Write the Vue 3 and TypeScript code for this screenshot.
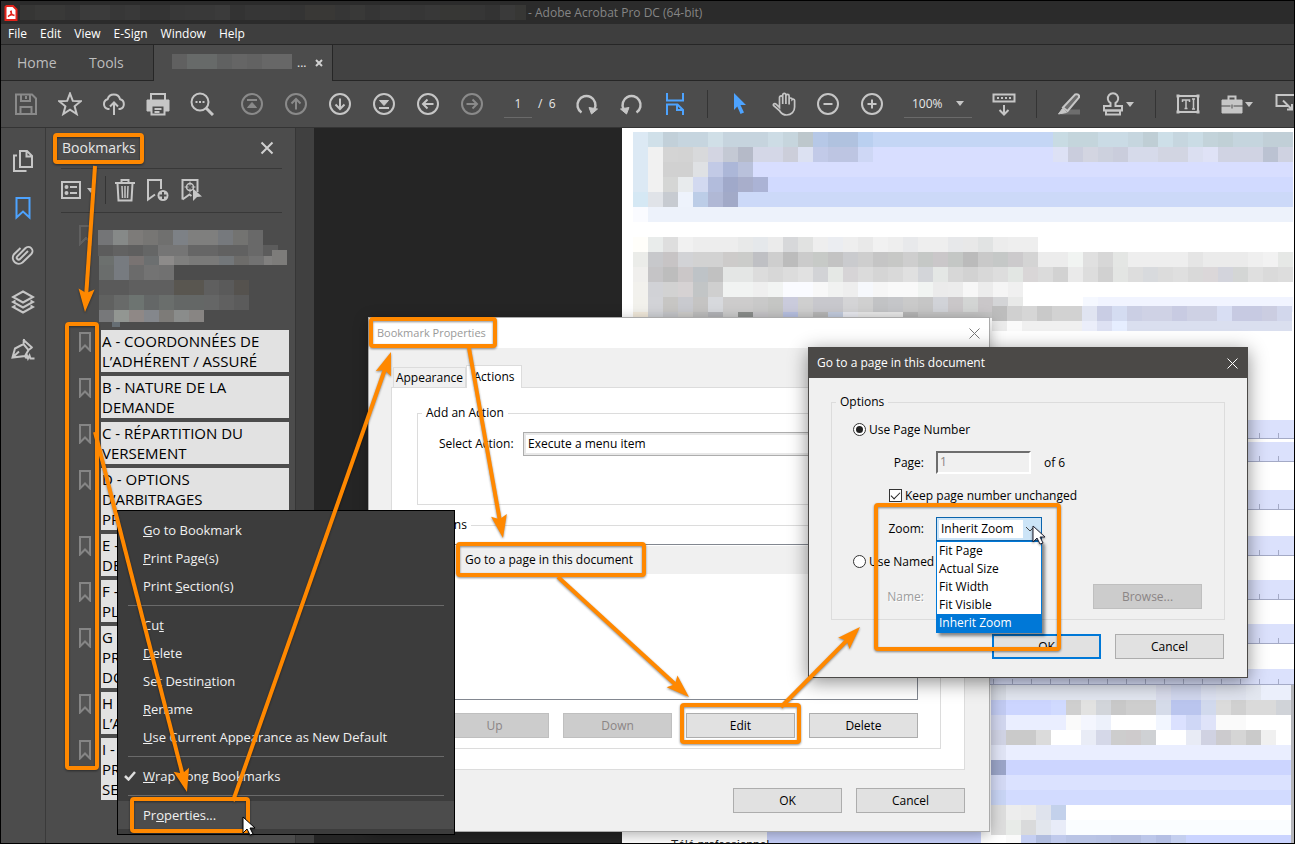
<script setup lang="ts">
import { ref } from 'vue'

interface Rect { x: number; y: number; w: number; h: number; fill: string }
type Strip = [x: number, y: number, h: number, colours: string]

/** Expands strips such as "c6d5df*3 f0f0f0" into coloured cells. */
function cells(strips: Strip[], size = 15): Rect[] {
  const out: Rect[] = []
  for (const [x0, y, h, colours] of strips) {
    let x = x0
    for (const token of colours.split(' ')) {
      const [hex, count] = token.split('*')
      const w = Number(count ?? 1) * size
      if (hex !== '-') out.push({ x, y, w, h, fill: '#' + hex })
      x += w
    }
  }
  return out
}

const titleCells = cells([[0, 0, 15, '363635 393938*2 363636 3b3b3b*2 373737 393939 343434*2 383838 393939*2 3b3b3b 333333 363636*3 343434 393836*2 363636 393938 353535 383838*2 363636 383838 373735*2 363636 333333 3a3a3a 373735*2']])
const tabCells = cells([[0, 0, 15, '606060 676a69*2 606161 656565 626262 676767*2']])

const panelCells = cells([
  [52, 17, 15, '747577 868988 7d7b79 777674 70706f 7d8186 7f7f7e*2 76797d 737371 696969'],
  [52, 32, 11, '5c5c5c 626262 5f5f5f 656666 757575*2 666666*2 616161*2 696969 5c5c5c'],
  [53, 43, 9, '6c706e 777b80 797372 6c6f70 8d8b8a 7f7f7e 7a7a79*2 73777a 6d6c6a 727272 81807f'],
  [226, 37, 15, '7d7c7a'],
  [53, 52, 15, '6a6d6c 777b80 6b6b6b 737373 717171'],
  [53, 67, 15, '5a5a5a*2 5f5f5f*3 595650*2 5f5f5f 5a5a5a 55524e'],
  [53, 82, 15, '606160 686a69 6d7471 646767 6a6e6c 646766*2 656666 606060 5b5b5b'],
  [53, 97, 12, '77787a 929692 8f8886 84878c 7d7b78 8a8c8b 888583'],
])

const pageCells = cells([
  [11, 4, 15, 'dce9f4 d0e0e9 c2d0d9 c6d5df*2 d0dfe7 c6d4de*3 cddce5 c6d5dd bdc7cc b6c8e7 b0c2df*2 bad0f0 c4d6f5*12 c8dbe3 c4d5dc*2 cadbe5*2 c6d6df bfced5 cddfe8 c6d6df cadce5 c3d3da c0d0d6 c5d5de*2 c1cfd7*2'],
  [11, 19, 15, 'dce9f4 f1f1f1 d4d4d4 d3d3d3 d8d9db d3d5e2 c4c9d4 b5bac8 d4d7e7*2 ccceda dce1f2 c2cae8 bdc5e2*2 ced7f5 d8deff*12 dde1f5 cacddd d3d5e1 cdd1de cacddc d6daea*2 d2d5e2*2 dbdff1 dfe2f6 d0d3e3*3 bbc2d2 cfd2e1'],
  [11, 34, 15, 'dce9f4 f1f1f1 d1d1d1*2 dfe1e4 c2cae6 acb7d8 b9c1db d8deff*36'],
  [11, 49, 15, 'dce9f4 f1f1f1 d5d6d5 e8ebed d2d9f0 b2bcdc a0a9ca a8aecb abb3d5 d1daff*35'],
  [11, 64, 15, 'd5e8f4 e0e3e8 c7cbd1 eef3fc bccde7 b0b8d5 a2aac8 ccd9f8*37'],
  [11, 79, 15, 'fafbff edf2fb*43'],
  [11, 109, 15, 'fffefa e9eceb dedede f1f1f1 ededed*3 e8e9e9 e5e8eb ebebeb d7d8da e1e2e1 eeeeee ebedf1 eeeeee e9e9e9 f1f1f1 eeeeee e8e9eb eeeeee*2 e7e8ea e8e8e8 e1e3e3 ececec eeeeee*2'],
  [11, 124, 15, 'ebece9 c7c8cb c7c4c5 d2d3d6 d2d2d2*2 cdcbca cbccca bfc0c4 cecece bcbcbc cbcbcb c7cac7 c3c3c3 cacbce cecece c5c5c5 c7c8c6 cecece c5c8c6 cac7c9 c4c7c5 bbbbbb c9c9c9 c5c8c7 cccacc d4d4d4 ececec*2 f1f4f2 e0e0e0 d7d7d7 e4e6e4 eeeeee*4 e5e5e5 ebebeb*3 efefef f2f2f2 e6e8e6'],
  [11, 139, 15, 'f0efed c5c4c6 bdbdbd cbc7c8 bec3c7 c1c1c1 e4e6e5*2 dcdcdc d7d7d7 dcdcdc e1e1e1 d2d3d6 e5e8e5 d6d4d6 dbdbdb d5d5d5 d9d9d9 e0e0e0 d3d5d9 e4e7e5 d7d7d7 d2d2d2 d8d8d8 dddddd e2e6e3 d9d6d7 dbdbdb d2d2d2 eaeaea dddddd d1d1d1 e3e5e3 dddddd d8dadd dcdcdc dfdfdf d9d9d9 dbd7d9 d3d4dc d4d6d5 dfdfdf dadada dddddd'],
  [11, 154, 15, 'f2f1ed d1d2d6 d2d2d2 d6d2d3 c2c5c6 cfcfcf f1f3f2*2 efefef f2f4f3 fafbff*2 f8f8f8 f1f2f1 eeeeee f6f8fc f6f6f6 f9f9f9*2 f1f4f2 ebebeb ececec f7f7f7 ececec f5f5f5 f0f0f0'],
  [11, 169, 15, 'f2f1ec d2d3d7 c7c6c4 c9cacf c5c4c3 d7d9dd cdcccc*2 c9c9c9 c5c6c4 cacbdc cfcfcf c8c8cd*2 d4d4d6 d0d0d0 c2c3c5 c5c6c9 cacaca c6c6c6 d1d3d8 cac7c9 d3d5d4 cac7c9 d4d5d7 e8e9e8 -*4 f5f8ff f1f4ff*13'],
  [11, 184, 6, 'f2eadc d0d2d6 c5c6c9 cdccca bebebe b3b4b8 cccccc 8b8e8c c7c6c9 c6c6c6 b8c1e2 cccccc b7b7b7 c3ccde e9eaf0 e9e9e9*3 b6b6b6 c4c4c4*5'],
  [370, 178, 15, 'bdbdbd d0d0d0 d6d6d6 c9c9c9 d2d2d2*2 e0e4f1 c9cde4 d4dcf1 cbcfe4 cfd2e5*2 c8cbe2 ced1e4*2 d8def3 c7cae2*2 cbcde1 d2d7ec'],
  [370, 193, 10, 'ebebeb fafafa f0f0f0*4 ebeefa dde1f3 e6eeff dadfef*11'],
  [369, 557, 15, 'd8dce5 e2e6f0*10 d9dcec d1d7ee*2 dce1f1 dfe3ee*2 e3e7f0 ebeffb*2'],
  [369, 572, 15, 'c1caf1 ccd5ff*3 d0daff cfcfcf e2e2e1 d2d5da c8c8c8 cecece*2 d5dbe9 bac5ee*2 d1d9ed dbdbdb d0d0d0 dadada*2 d0d3d8'],
  [369, 587, 15, 'd1d6ee eaeeff*4 fafafa f4f6fe edf1fb ffffff*3 f2f6ff dbe1ff cfd7f6 dfe3f9 fafafa*2 ffffff*3'],
  [369, 602, 15, 'd0d3e4 cacaca*2 dbdbdb ffffff*2 e9ecf6 d5d8e8 cdcdcd cecbcc cfd1d4 ffffff*2 e8ebf5 d0d2e2 cccbce d5d5d5 cacaca f0f0f0 ffffff'],
  [369, 617, 15, 'e0e4f5 eaeeff*19'],
  [369, 632, 15, '9ba5c8 ccd5ff*19'],
  [369, 647, 15, 'd3d9f4 dbe2ff*19'],
  [369, 662, 15, 'c8d4f4 d2dbff*19'],
  [369, 677, 15, 'dddddd ededed ebebeb dfe3ed c3d1eb ffffff*15'],
  [369, 692, 15, 'dddddd e8ebe8 d9dadb e2e6ed e8ecf8 fafdff*15'],
  [369, 707, 8, 'ffffff fafafa c5cff2 b1bddf c0caec b9c4e5*2 b7c2e4 b4bee0*2 bcc7ea b4bfe4 c4cfef cad4ff*7'],
])

const bands: Array<[y: number, h: number]> = [[292, 19], [314, 20], [362, 20], [408, 20], [452, 20], [496, 20], [541, 16]]
const ticks = Array.from({ length: 16 }, (_, i) => 371 + i * 19)

const menus = ['File', 'Edit', 'View', 'E-Sign', 'Window', 'Help']

const icons: Record<string, string> = {
  save: '<path d="M2 2.500h16l4 4V22H2z"/><path d="M7 3v6h9V3M12 4v3M6.500 22v-7h11v7"/>',
  star: '<path d="M12 1.500l2.800 7.400 8 .4-6.200 5 2.100 7.700-6.700-4.300L5.300 22l2.100-7.700-6.200-5 8-.4z"/>',
  cloud: '<path d="M7.500 17H6a5 5 0 0 1-.4-9.700 6.500 6.500 0 0 1 12.500 0A5 5 0 0 1 18 17h-1.500"/><path d="M12 23V11M8 14.500l4-4 4 4"/>',
  print: '<path class="solid" d="M1 8h22v11h-4v-5H5v5H1z"/><path d="M5 8V2h14v6M5.500 14v8.500h13V14M8.500 17h7M8.500 20h5"/>',
  search: '<circle cx="10" cy="10" r="8.500"/><path d="M16 16l7 7" stroke-width="3"/><path d="M5.500 10h2M9 10h2M12.500 10h2"/>',
  first: '<circle cx="12" cy="12" r="10"/><path d="M7 8h10"/><path class="solid" d="M12 10.500l4.500 5h-9z"/>',
  up: '<circle cx="12" cy="12" r="10"/><path d="M12 17.500V7M7.500 11.500L12 7l4.500 4.500"/>',
  down: '<circle cx="12" cy="12" r="10"/><path d="M12 6.500V17M7.500 12.500L12 17l4.500-4.500"/>',
  last: '<circle cx="12" cy="12" r="10"/><path d="M7 16h10"/><path class="solid" d="M12 13.500l4.500-5h-9z"/>',
  back: '<circle cx="12" cy="12" r="10"/><path d="M17.500 12H7M11.500 7.500L7 12l4.500 4.500"/>',
  next: '<circle cx="12" cy="12" r="10"/><path d="M6.500 12H17M12.500 7.500L17 12l-4.500 4.500"/>',
  cw: '<path d="M6.500 20.500A9 9 0 1 1 19.500 17" stroke-width="2.500"/><path class="solid" d="M14 15.500l8.500 1.500-6 5z"/>',
  ccw: '<path d="M17.500 20.500A9 9 0 1 0 4.500 17" stroke-width="2.500"/><path class="solid" d="M10 15.500l-8.500 1.500 6 5z"/>',
  fit: '<path d="M4 1v7.500h16V1M4 23V12.500h10.500L20 18v5M14 12.500V18h6"/>',
  arrow: '<path class="solid bare" d="M6 1l12 12h-5.500l3.500 7.500-3.500 1.500-3.200-7.500L6 18z"/>',
  hand: '<path d="M7.500 14V5.500a1.600 1.600 0 0 1 3.200 0V12 3a1.600 1.600 0 0 1 3.200 0v9V4a1.600 1.600 0 0 1 3.200 0v8.500V7.500a1.500 1.500 0 0 1 3 0 1.500 1.500 0 0 1 2.500 1V15c0 4.500-3 8-8 8-4 0-5.800-2-7.200-4.500L1.500 13.500c-.6-1.500 1.400-2.600 2.600-1.300L7.500 15.500z" stroke-width="1.700"/>',
  minus: '<circle cx="12" cy="12" r="10"/><path d="M7.500 12h9"/>',
  plus: '<circle cx="12" cy="12" r="10"/><path d="M7.500 12h9M12 7.500v9"/>',
  scroll: '<path d="M1.500 2.500h21v7h-21zM12 13v9M7.500 18l4.500 4.500 4.500-4.500"/><path d="M5 6h14" stroke-dasharray="2 2"/>',
  pen: '<path class="dim" d="M8 17.500h15v5H4z"/><path class="dim" d="M6 15.500L18 2.500h4v3L10.500 19z"/><path d="M6 15.500L18 2.500q3-1 4 1v2L10.500 19z"/><path class="solid" d="M5.500 16.500l4 4L1.500 22z"/>',
  stamp: '<path d="M9.500 14V11A5.200 5.200 0 1 1 14.500 11v3h6.500v4.500H3V14z"/><path d="M5 22.500h14v-4H5z"/>',
  text: '<path d="M2 4h20v16H2z"/><path d="M6.500 10V8h7v2M10 8v8.500M8.500 16.500h3M16 7h3M17.500 7v10M16 17h3" stroke-width="1.500"/><path class="solid" d="M.5 2.500h3v3h-3zM20.500 2.500h3v3h-3zM.5 18.500h3v3h-3zM20.500 18.500h3v3h-3z" stroke="none"/>',
  briefcase: '<path class="solid" d="M2 8h20v13H2z"/><path d="M8.500 8V4.500h7V8"/><path class="cut" d="M1 14h9.500M13.500 14H23M12 12.500v4"/>',
  note: '<path d="M15 14H2.500V3H22v10"/><path d="M9 8.500l9 9M18 12v5.500h-5"/>',
}

interface Tool { icon: string; label: string; off?: boolean; blue?: boolean; caret?: boolean; gap?: boolean }
const fileTools: Tool[] = [
  { icon: 'save', label: 'Save', off: true }, { icon: 'star', label: 'Star' }, { icon: 'cloud', label: 'Upload' },
  { icon: 'print', label: 'Print' }, { icon: 'search', label: 'Search' },
  { icon: 'first', label: 'First page', off: true, gap: true }, { icon: 'up', label: 'Previous page', off: true },
  { icon: 'down', label: 'Next page' }, { icon: 'last', label: 'Last page' },
  { icon: 'back', label: 'Previous view' }, { icon: 'next', label: 'Next view', off: true },
]
const viewTools: Tool[] = [
  { icon: 'cw', label: 'Rotate clockwise' }, { icon: 'ccw', label: 'Rotate counterclockwise' }, { icon: 'fit', label: 'Scrolling pages', blue: true },
]
const pointerTools: Tool[] = [
  { icon: 'arrow', label: 'Select', blue: true }, { icon: 'hand', label: 'Pan' },
  { icon: 'minus', label: 'Zoom out' }, { icon: 'plus', label: 'Zoom in' },
]
const markTools: Tool[] = [{ icon: 'pen', label: 'Highlight' }, { icon: 'stamp', label: 'Stamp', caret: true }]
const editTools: Tool[] = [
  { icon: 'text', label: 'Edit text' }, { icon: 'briefcase', label: 'More tools', caret: true }, { icon: 'note', label: 'Comment' },
]

const bookmarks: string[][] = [
  ['A - COORDONNÉES DE', 'L’ADHÉRENT / ASSURÉ'],
  ['B - NATURE DE LA', 'DEMANDE'],
  ['C - RÉPARTITION DU', 'VERSEMENT'],
  ['D - OPTIONS', 'D’ARBITRAGES', 'PR'],
  ['E -', 'DE'],
  ['F -', 'PL'],
  ['G', 'PR', 'DO'],
  ['H', 'L’A'],
  ['I -', 'PR', 'SE'],
]

interface MenuItem { pre: string; key: string; post: string; checked?: boolean; active?: boolean }
const menuGroups: MenuItem[][] = [
  [{ pre: '', key: 'G', post: 'o to Bookmark' }, { pre: '', key: 'P', post: 'rint Page(s)' }, { pre: 'Print ', key: 'S', post: 'ection(s)' }],
  [{ pre: 'Cu', key: 't', post: '' }, { pre: '', key: 'D', post: 'elete' }, { pre: 'Set Destin', key: 'a', post: 'tion' }, { pre: '', key: 'R', post: 'ename' }, { pre: '', key: 'U', post: 'se Current Appearance as New Default' }],
  [{ pre: '', key: 'W', post: 'rap Long Bookmarks', checked: true }],
  [{ pre: 'Pr', key: 'o', post: 'perties...', active: true }],
]

const zoomChoices = ['Fit Page', 'Actual Size', 'Fit Width', 'Fit Visible', 'Inherit Zoom']
const zoom = ref('Inherit Zoom')
const target = ref('page')
const keepPage = ref(true)

const frames = [
  [55, 135, 87, 27], [67, 324, 30, 444], [371, 319, 124, 27], [458, 544, 186, 31],
  [682, 705, 117, 37], [132, 799, 116, 32], [876, 505, 183, 144],
]
const arrows = [
  [95, 166, 85, 312], [95, 432, 187, 792], [233, 801, 391, 352],
  [469, 348, 503, 538], [558, 577, 689, 697], [781, 707, 860, 627],
].map(([x1, y1, x2, y2]) => {
  const len = Math.hypot(x2 - x1, y2 - y1)
  const angle = (Math.atan2(y2 - y1, x2 - x1) * 180) / Math.PI
  return { len, place: `translate(${x1} ${y1}) rotate(${angle})` }
})
</script>

<template>
  <div class="app">
    <header class="titlebar">
      <svg class="logo" width="14" height="16" viewBox="0 0 14 16">
        <path d="M2.500 1h6.500L12.500 4.500V15h-11V2z" fill="#fff" stroke="#e2231a" stroke-width="2" />
        <path d="M4 11.500c3-1.500 4-4 3-6M6.500 6c.5 3 2 4 4 4.500M4 11.500c2-2 4.500-2 6.500-1" fill="none" stroke="#e2231a" stroke-width="1.400" />
      </svg>
      <svg class="title-mask" width="506" height="15" shape-rendering="crispEdges">
        <rect v-for="(c, i) in titleCells" :key="i" :x="c.x" :y="c.y" :width="c.w" :height="c.h" :fill="c.fill" />
      </svg>
      <span>- Adobe Acrobat Pro DC (64-bit)</span>
    </header>

    <nav class="menubar"><button v-for="m in menus" :key="m" type="button">{{ m }}</button></nav>

    <nav class="tabs">
      <button class="big" type="button">Home</button>
      <button class="big" type="button">Tools</button>
      <div class="doc-tab">
        <svg width="120" height="15" shape-rendering="crispEdges">
          <rect v-for="(c, i) in tabCells" :key="i" :x="c.x" :y="c.y" :width="c.w" :height="c.h" :fill="c.fill" />
        </svg>
        <span>...</span>
        <button type="button" aria-label="Close tab">
          <svg width="8" height="8" viewBox="0 0 8 8"><path d="M1 1l6 6M7 1L1 7" stroke="#d0d0d0" stroke-width="2" /></svg>
        </button>
      </div>
    </nav>

    <div class="toolbar">
      <button v-for="t in fileTools" :key="t.icon" type="button" class="tool" :class="{ off: t.off, gap: t.gap }" :aria-label="t.label">
        <svg viewBox="0 0 24 24" v-html="icons[t.icon]" />
      </button>
      <div class="pager"><input type="text" value="1" aria-label="Page number"><span>/&nbsp; 6</span></div>
      <button v-for="t in viewTools" :key="t.icon" type="button" class="tool" :class="{ blue: t.blue }" :aria-label="t.label">
        <svg viewBox="0 0 24 24" v-html="icons[t.icon]" />
      </button>
      <i class="divider" />
      <button v-for="t in pointerTools" :key="t.icon" type="button" class="tool" :class="{ blue: t.blue }" :aria-label="t.label">
        <svg viewBox="0 0 24 24" v-html="icons[t.icon]" />
      </button>
      <div class="scale">
        <select aria-label="Zoom level"><option>100%</option></select>
        <i class="caret" />
      </div>
      <button type="button" class="tool" aria-label="Page display"><svg viewBox="0 0 24 24" v-html="icons.scroll" /></button>
      <i class="divider" />
      <button v-for="t in markTools" :key="t.icon" type="button" class="tool" :class="{ wide: t.caret }" :aria-label="t.label">
        <svg viewBox="0 0 24 24" v-html="icons[t.icon]" /><i v-if="t.caret" class="caret" />
      </button>
      <i class="divider" />
      <button v-for="t in editTools" :key="t.icon" type="button" class="tool" :class="{ wide: t.caret }" :aria-label="t.label">
        <svg viewBox="0 0 24 24" v-html="icons[t.icon]" /><i v-if="t.caret" class="caret" />
      </button>
    </div>

    <main class="workspace">
      <nav class="rail">
        <button type="button" aria-label="Page thumbnails">
          <svg viewBox="0 0 24 24"><path d="M9 2h7l5 5v11H9zM15.500 2v5.500H21M6 6.500H3v15.500h11.500v-1" /></svg>
        </button>
        <button type="button" class="blue" aria-label="Bookmarks">
          <svg viewBox="0 0 24 24"><path d="M5.500 2h13v19.500L12 15.500l-6.500 6z" /></svg>
        </button>
        <button type="button" aria-label="Attachments">
          <svg viewBox="0 0 24 24"><path d="M17 8l-8 8a1.800 1.800 0 0 1-2.700-2.600l8-8.200a4 4 0 0 1 6 5.800L11.500 19.500a6 6 0 0 1-8.700-8L9.500 5" /></svg>
        </button>
        <button type="button" aria-label="Layers">
          <svg viewBox="0 0 24 24"><path d="M12 1.500L22 7l-10 5.500L2 7zM4.500 10.500L2 12l10 5.500L22 12l-2.500-1.500M4.500 15.500L2 17l10 5.500L22 17l-2.500-1.500" /></svg>
        </button>
        <button type="button" aria-label="Signatures">
          <svg viewBox="0 0 24 24"><path d="M1.500 20.500L4 11.500l8.500-4.500 5 6-3.500 6zM1.500 20.500L8 14.500M12.500 7L13 2M17.500 13l3.500-2.500M12 2.500l9.500 8.500M14.500 21.500l1.500-3 1 3 1.500-3 1 3h4" /></svg>
        </button>
      </nav>

      <aside class="panel">
        <header>
          <h2>Bookmarks</h2>
          <button type="button" aria-label="Close panel"><svg width="14" height="14" viewBox="0 0 14 14"><path d="M1.500 1.500l11 11M12.500 1.500l-11 11" stroke="#d0d0d0" stroke-width="2" /></svg></button>
        </header>
        <div class="panel-tools">
          <button type="button" aria-label="Options" class="opts">
            <svg width="20" height="18" viewBox="0 0 20 18"><path d="M1 1h18v16H1zM9 6h7M9 12h7M4 6h3M4 12h3" /><circle cx="5.500" cy="6" r="1" /><circle cx="5.500" cy="12" r="1" /></svg>
            <i class="caret" />
          </button>
          <i class="divider" />
          <button type="button" aria-label="Delete bookmark">
            <svg width="22" height="24" viewBox="0 0 22 24"><path d="M1 5h20M7.500 4.500V2h7v2.500M3.500 5.500l1 17h13l1-17" /><path d="M8 8l.5 12M11 8v12M14 8l-.5 12" stroke-width="1.500" /></svg>
          </button>
          <button type="button" aria-label="New bookmark">
            <svg width="24" height="24" viewBox="0 0 24 24"><path d="M9 16.500L2 21.500V2h13v9" /><circle cx="17" cy="17.500" r="5.500" class="fill" /><path d="M13.500 17.500h7M17 14v7" class="cut" /></svg>
          </button>
          <button type="button" aria-label="Find bookmark">
            <svg width="24" height="24" viewBox="0 0 24 24"><path d="M2.500 21.500V2h15v12M2.500 21.500l7-5 2 1.500" /><circle cx="10" cy="9" r="3.500" stroke-width="1.500" /><path d="M10 3.500v4M10 10.500v4M4.500 9h4M11.500 9h4" stroke-width="1" /><path d="M13 10.500l9 8-5 .5-4 4z" class="fill" /></svg>
          </button>
        </div>
        <svg class="masked" shape-rendering="crispEdges">
          <path d="M34 13h11v18l-5-6-6 6z" fill="none" stroke="#606060" stroke-width="2" />
          <rect v-for="(c, i) in panelCells" :key="i" :x="c.x" :y="c.y" :width="c.w" :height="c.h" :fill="c.fill" />
          <rect x="66" y="109" width="8" height="5" fill="#666e74" />
        </svg>
        <ul class="bookmarks">
          <li v-for="b in bookmarks" :key="b[0]">
            <svg width="12" height="20" viewBox="0 0 12 20"><path d="M1 1h10v17.500L6 13.500l-5 5z" fill="#555" stroke="#858585" stroke-width="2" /></svg>
            <a href="#"><span v-for="line in b" :key="line">{{ line }}</span></a>
          </li>
        </ul>
      </aside>
      <div class="splitter" />
      <div class="canvas" />
      <section class="page">
        <svg class="paper" shape-rendering="crispEdges">
          <rect x="0" y="0" width="100%" height="100%" fill="#fff" />
          <template v-for="[y, h] in bands" :key="y">
            <rect x="368" :y="y" width="304" :height="h" fill="#dbe1fc" />
            <rect x="368" :y="y + h - 1" width="304" height="1" fill="#a4aac6" />
            <rect v-for="t in ticks" :key="t" :x="t" :y="y + h - 6" width="1" height="5" fill="#a4aac6" />
          </template>
          <rect v-for="(c, i) in pageCells" :key="i" :x="c.x" :y="c.y" :width="c.w" :height="c.h" :fill="c.fill" />
          <rect x="669" y="557" width="3" height="158" fill="#b4b5ba" />
          <rect x="145" y="700" width="214" height="15" fill="#c8d1fb" />
        </svg>
        <p class="cut-label">Télé professionnel</p>
      </section>
    </main>

    <section class="dialog props" role="dialog" aria-label="Bookmark Properties">
      <header>
        <h3>Bookmark Properties</h3>
        <button type="button" aria-label="Close"><svg width="11" height="11" viewBox="0 0 11 11"><path d="M.5 .5l10 10M10.500 .5l-10 10" stroke="#777" /></svg></button>
      </header>
      <div class="props-body">
        <div class="prop-tabs"><button type="button">Appearance</button><button type="button" class="on">Actions</button></div>
        <div class="tab-page">
          <fieldset class="add">
            <legend>Add an Action</legend>
            <div class="line">
              <label for="action">Select Action:</label>
              <select id="action"><option>Execute a menu item</option></select>
            </div>
          </fieldset>
          <fieldset>
            <legend>Actions</legend>
            <ul class="action-list"><li>Go to a page in this document</li></ul>
            <div class="buttons">
              <button type="button" class="btn" disabled>Up</button>
              <button type="button" class="btn" disabled>Down</button>
              <button type="button" class="btn">Edit</button>
              <button type="button" class="btn">Delete</button>
            </div>
          </fieldset>
        </div>
        <footer class="buttons"><button type="button" class="btn">OK</button><button type="button" class="btn">Cancel</button></footer>
      </div>
    </section>

    <section class="dialog goto" role="dialog" aria-label="Go to a page in this document">
      <header>
        <h3>Go to a page in this document</h3>
        <button type="button" aria-label="Close"><svg width="11" height="11" viewBox="0 0 11 11"><path d="M.5 .5l10 10M10.500 .5l-10 10" stroke="#fff" /></svg></button>
      </header>
      <div class="goto-body">
        <fieldset>
          <legend>Options</legend>
          <div class="row radio"><input id="by-page" v-model="target" type="radio" value="page"><label for="by-page">Use Page Number</label></div>
          <div class="row"><label class="name" for="page-no">Page:</label><input id="page-no" class="sunken" type="text" value="1" disabled><span>of 6</span></div>
          <div class="row check"><input id="keep" v-model="keepPage" type="checkbox"><label for="keep">Keep page number unchanged</label></div>
          <div class="row">
            <label class="name" for="zoom">Zoom:</label>
            <div class="combo">
              <select id="zoom" v-model="zoom"><option v-for="z in zoomChoices" :key="z">{{ z }}</option></select>
              <svg class="chevron" width="10" height="6" viewBox="0 0 10 6"><path d="M1 1l4 4 4-4" fill="none" stroke="#444" /></svg>
              <ul class="choices"><li v-for="z in zoomChoices" :key="z" :class="{ on: z === zoom }">{{ z }}</li></ul>
            </div>
          </div>
          <div class="row radio"><input id="by-name" v-model="target" type="radio" value="name"><label for="by-name">Use Named D</label></div>
          <div class="row last"><span class="name faint">Name:</span><button type="button" class="btn" disabled>Browse...</button></div>
        </fieldset>
        <footer class="buttons"><button type="button" class="btn primary">OK</button><button type="button" class="btn">Cancel</button></footer>
      </div>
    </section>

    <div class="context" role="menu">
      <div v-for="(g, i) in menuGroups" :key="i" class="group">
        <button v-for="m in g" :key="m.pre + m.key + m.post" type="button" role="menuitem" :class="{ active: m.active }">
          <svg v-if="m.checked" width="12" height="10" viewBox="0 0 12 10"><path d="M1 5l3.500 3.500L11 1" fill="none" stroke="#ddd" stroke-width="2.500" /></svg>
          <span>{{ m.pre }}<u>{{ m.key }}</u>{{ m.post }}</span>
        </button>
      </div>
    </div>

    <svg class="marks">
      <rect v-for="(f, i) in frames" :key="i" :x="f[0]" :y="f[1]" :width="f[2]" :height="f[3]" rx="2" fill="none" stroke="#ff8800" stroke-width="4" />
      <g v-for="(a, i) in arrows" :key="'a' + i" :transform="a.place">
        <path :d="`M0 0H${a.len - 18}`" stroke="#ff8800" stroke-width="4" />
        <path :d="`M${a.len} 0l-23 8 4 -8 -4 -8z`" fill="#ff8800" />
      </g>
      <path d="M243 817v16l4-4 3 6 3-1-3-6h5z" fill="#fff" stroke="#000" />
      <path d="M1033 526v16l4-4 3 6 3-1-3-6h5z" fill="#fff" stroke="#223" />
    </svg>
  </div>
</template>

<style>
body { margin: 0; overflow: hidden; }
</style>

<style scoped>
.app {
  position: relative; box-sizing: border-box; height: 100vh; border: 1px solid #000; overflow: hidden;
  display: flex; flex-direction: column; background: #252525; color: #e8e8e8;
  font: 12px/16px "Open Sans", "Noto Sans", sans-serif;
}
.app *, .app *::before { box-sizing: border-box; }
button, input, select { font: inherit; color: inherit; padding: 0; border: 0; background: none; margin: 0; }
h2, h3, p, ul { margin: 0; padding: 0; font-weight: 400; list-style: none; }
svg { flex: none; display: block; }

.titlebar { height: 23px; flex: none; display: flex; align-items: center; padding-left: 3px; background: #2b2b2b; color: #858585; }
.title-mask { margin: 0 2px; }
.menubar { height: 21px; flex: none; display: flex; align-items: center; gap: 13px; padding-left: 7px; background: #3e3e3e; border-bottom: 1px solid #262626; color: #fff; }
.tabs { height: 36px; flex: none; display: flex; background: #424242; border-bottom: 1px solid #262626; }
.tabs .big { font-size: 14px; color: #bdbdbd; padding: 0 0 0 16px; text-align: left; width: 72px; }
.tabs .big + .big { width: 80px; }
.doc-tab { width: 180px; height: 36px; display: flex; align-items: center; background: #4c4c4c; border: solid #262626; border-width: 0 1px; padding-left: 18px; }
.doc-tab svg { margin-top: -4px; }
.doc-tab span { margin-left: 5px; width: 18px; }
.doc-tab button svg { margin-top: 0; }

.toolbar { height: 47px; flex: none; display: flex; align-items: center; padding-left: 3px; background: #4c4c4c; border-bottom: 1px solid #343434; overflow: hidden; }
.tool { width: 44px; height: 44px; flex: none; display: flex; align-items: center; justify-content: center; color: #c6c6c6; }
.tool svg { width: 24px; height: 24px; fill: none; stroke: currentColor; stroke-width: 2; }
.tool.off { color: #8a8a8a; }
.tool.gap { margin-left: 6px; }
.tool.blue, .rail .blue { color: #4da3ff; }
.tool.wide { width: 54px; justify-content: flex-start; padding-left: 10px; gap: 1px; }
.tool :deep(.solid) { fill: currentColor; stroke-width: 1; }
.tool :deep(.bare) { stroke: none; }
.tool :deep(.dim) { fill: #6e6e6e; stroke: none; }
.tool :deep(.cut) { stroke: #4c4c4c; stroke-width: 1; }
.caret { flex: none; width: 0; height: 0; border: 4px solid transparent; border-top: 5px solid #c6c6c6; border-bottom: 0; }
.divider { flex: none; width: 1px; height: 28px; margin: 0 10px; background: #343434; }
.pager { width: 71px; flex: none; display: flex; align-items: center; padding-left: 10px; gap: 6px; }
.pager input { width: 28px; height: 28px; text-align: center; border-bottom: 1px solid #6a6a6a; }
.scale { width: 68px; height: 28px; flex: none; margin: 0 10px; display: flex; align-items: center; border-bottom: 1px solid #6a6a6a; }
.scale select { appearance: none; width: 52px; padding-left: 8px; }

.workspace { flex: 1; min-height: 0; display: flex; background: #252525; }
.rail { width: 45px; flex: none; background: #4c4c4c; border-right: 1px solid #3a3a3a; display: flex; flex-direction: column; align-items: center; padding-top: 9px; }
.rail button { width: 44px; height: 47px; display: flex; align-items: center; justify-content: center; color: #c6c6c6; }
.rail svg { width: 24px; height: 24px; fill: none; stroke: currentColor; stroke-width: 2; }
.panel { width: 249px; flex: none; background: #4c4c4c; overflow: hidden; }
.panel header { height: 41px; margin: 0 13px 0 15px; padding: 0 8px 0 1px; display: flex; align-items: center; justify-content: space-between; border-bottom: 1px solid #383838; }
.panel h2 { font-size: 14px; line-height: 20px; }
.panel-tools { height: 44px; margin: 0 13px 0 15px; padding-bottom: 1px; display: flex; align-items: center; gap: 10px; border-bottom: 1px solid #383838; }
.panel-tools svg { fill: none; stroke: #c6c6c6; stroke-width: 2; }
.panel-tools .fill { fill: #c6c6c6; stroke: none; }
.panel-tools .cut { stroke: #4c4c4c; }
.panel-tools .divider { margin: 0 -2px 0 0; }
.opts { display: flex; align-items: center; gap: 6px; width: 34px; }
.masked { width: 100%; height: 117px; }
.bookmarks { display: flex; flex-direction: column; gap: 4px; padding: 0 6px 0 33px; }
.bookmarks li { display: flex; align-items: flex-start; gap: 10px; }
.bookmarks svg { margin-top: 2px; }
.bookmarks a { flex: 1; display: flex; flex-direction: column; padding: 1px 0 1px 1px; background: #e2e2e2; color: #000; text-decoration: none; font-size: 15px; line-height: 20px; }
.splitter { width: 19px; flex: none; background: #404040; border-left: 1px solid #363636; }
.canvas { width: 308px; flex: none; }
.page { flex: 1; position: relative; overflow: hidden; }
.paper { width: 100%; height: 100%; }
.cut-label { position: absolute; left: 49px; bottom: -10px; color: #222; font-family: "Liberation Sans", sans-serif; }

.dialog { position: absolute; isolation: isolate; background: #f0f0f0; color: #000; }
.dialog header { height: 30px; display: flex; align-items: center; justify-content: space-between; padding: 0 9px 0 8px; }
.dialog h3 { font-size: 12px; line-height: 16px; }
.dialog fieldset { margin: 0; border: 1px solid #dcdcdc; min-width: 0; }
.dialog legend { height: 16px; padding: 0 4px; }
.buttons { display: flex; justify-content: flex-end; gap: 14px; }
.btn { width: 109px; height: 25px; background: #e1e1e1; border: 1px solid #adadad; text-align: center; }
.btn:disabled { background: #ccc; border-color: #bfbfbf; color: #8b8585; }
.btn.primary { border: 2px solid #0078d7; }

.props { left: 368px; top: 317px; width: 620px; box-shadow: 0 0 0 1px #aaa, 0 3px 14px rgba(0, 0, 0, .35); }
.props header { background: #fff; color: #999; }
.props h3 { font-size: 11px; }
.props-body { padding: 17px 24px 18px 22px; }
.prop-tabs { display: flex; align-items: flex-end; height: 22px; padding-left: 2px; }
.prop-tabs button { height: 20px; width: 73px; border: 1px solid #dcdcdc; border-bottom: 0; text-align: center; }
.prop-tabs .on { height: 23px; width: 56px; background: #fff; margin-bottom: -1px; z-index: 1; }
.tab-page { background: #fff; border: 1px solid #dcdcdc; padding: 17px 23px 20px 25px; display: flex; flex-direction: column; gap: 12px; }
.tab-page fieldset { padding: 11px 22px 10px; }
.tab-page legend { margin-left: -18px; }
.tab-page .add { min-height: 100px; }
.line { display: flex; align-items: center; margin-left: -1px; }
.line label { width: 84px; flex: none; }
.line select { flex: 1; appearance: none; height: 24px; border: 1px solid #adadad; box-shadow: inset 0 0 0 2px #e8e8e8; padding-left: 4px; background: #fff; }
.action-list { height: 156px; border: 1px solid #828790; padding-top: 1px; margin-bottom: 13px; }
.action-list li { height: 28px; background: #f0f0f0; padding: 6px 24px; }
.props footer { padding-top: 18px; }

.goto { left: 807px; top: 346px; width: 440px; border: 1px solid #4b4947; box-shadow: 0 4px 18px rgba(0, 0, 0, .45); }
.goto header { background: #4b4947; color: #fff; }
.goto-body { padding: 16px 22px 18px; }
.goto fieldset { padding: 3px 22px 4px 0; }
.goto legend { margin-left: 4px; }
.row { height: 33px; display: flex; align-items: center; }
.row.last { height: 37px; }
.row.last .btn { margin-left: auto; }
.row .name { width: 92px; margin-right: 12px; text-align: right; flex: none; }
.row.radio { padding-left: 21px; gap: 3px; }
.row.check { padding-left: 57px; gap: 3px; }
.row.radio input, .row.check input { appearance: none; width: 13px; height: 13px; border: 1px solid #333; background: #fff; display: grid; place-items: center; }
.row.radio input { border-radius: 50%; }
.row.radio input:checked::before { content: ""; width: 7px; height: 7px; border-radius: 50%; background: #222; }
.row.check input:checked::before { content: ""; width: 9px; height: 5px; border: solid #222; border-width: 0 0 1px 1px; rotate: -45deg; margin-top: -3px; }
.sunken { width: 95px; height: 23px; border: 2px solid; border-color: #6d6d6d #fff #fff #6d6d6d; padding: 0 2px 3px; color: #8b8585; margin-right: 13px; }
.faint { color: #9c9c9c; text-shadow: 1px 1px #fff; }
.combo { position: relative; width: 106px; height: 24px; border: 1px solid #0a64ad; background: #cce4f7; padding: 2px; }
.combo select { appearance: none; width: 84px; height: 18px; background: #fff; padding-left: 2px; }
.chevron { position: absolute; right: 6px; top: 8px; }
.choices { position: absolute; z-index: 2; left: -1px; right: -1px; top: 23px; background: #fff; border: 1px solid #0078d7; box-shadow: 3px 3px 3px rgba(0, 0, 0, .45); }
.choices li { height: 18px; line-height: 18px; padding-left: 2px; }
.choices .on { background: #0078d7; color: #fff; }
.goto footer { padding: 14px 1px 0 0; }

.context { position: absolute; left: 116px; top: 509px; width: 338px; background: #3c3c3c; border: 1px solid #000; padding: 5px 0; color: #f0f0f0; font-size: 13px; line-height: 20px; }
.context button { position: relative; display: flex; align-items: center; width: 100%; height: 28px; padding-left: 25px; text-align: left; }
.context button svg { margin-left: -19px; margin-right: 7px; }
.context .active { background: #4c4c4c; }
.group + .group::before { content: ""; display: block; height: 1px; margin: 5px 10px; background: #6a6a6a; }
.marks { position: absolute; left: -1px; top: -1px; width: calc(100% + 2px); height: calc(100% + 2px); pointer-events: none; filter: drop-shadow(0 1px 1px rgba(0, 0, 0, .45)); }
</style>
